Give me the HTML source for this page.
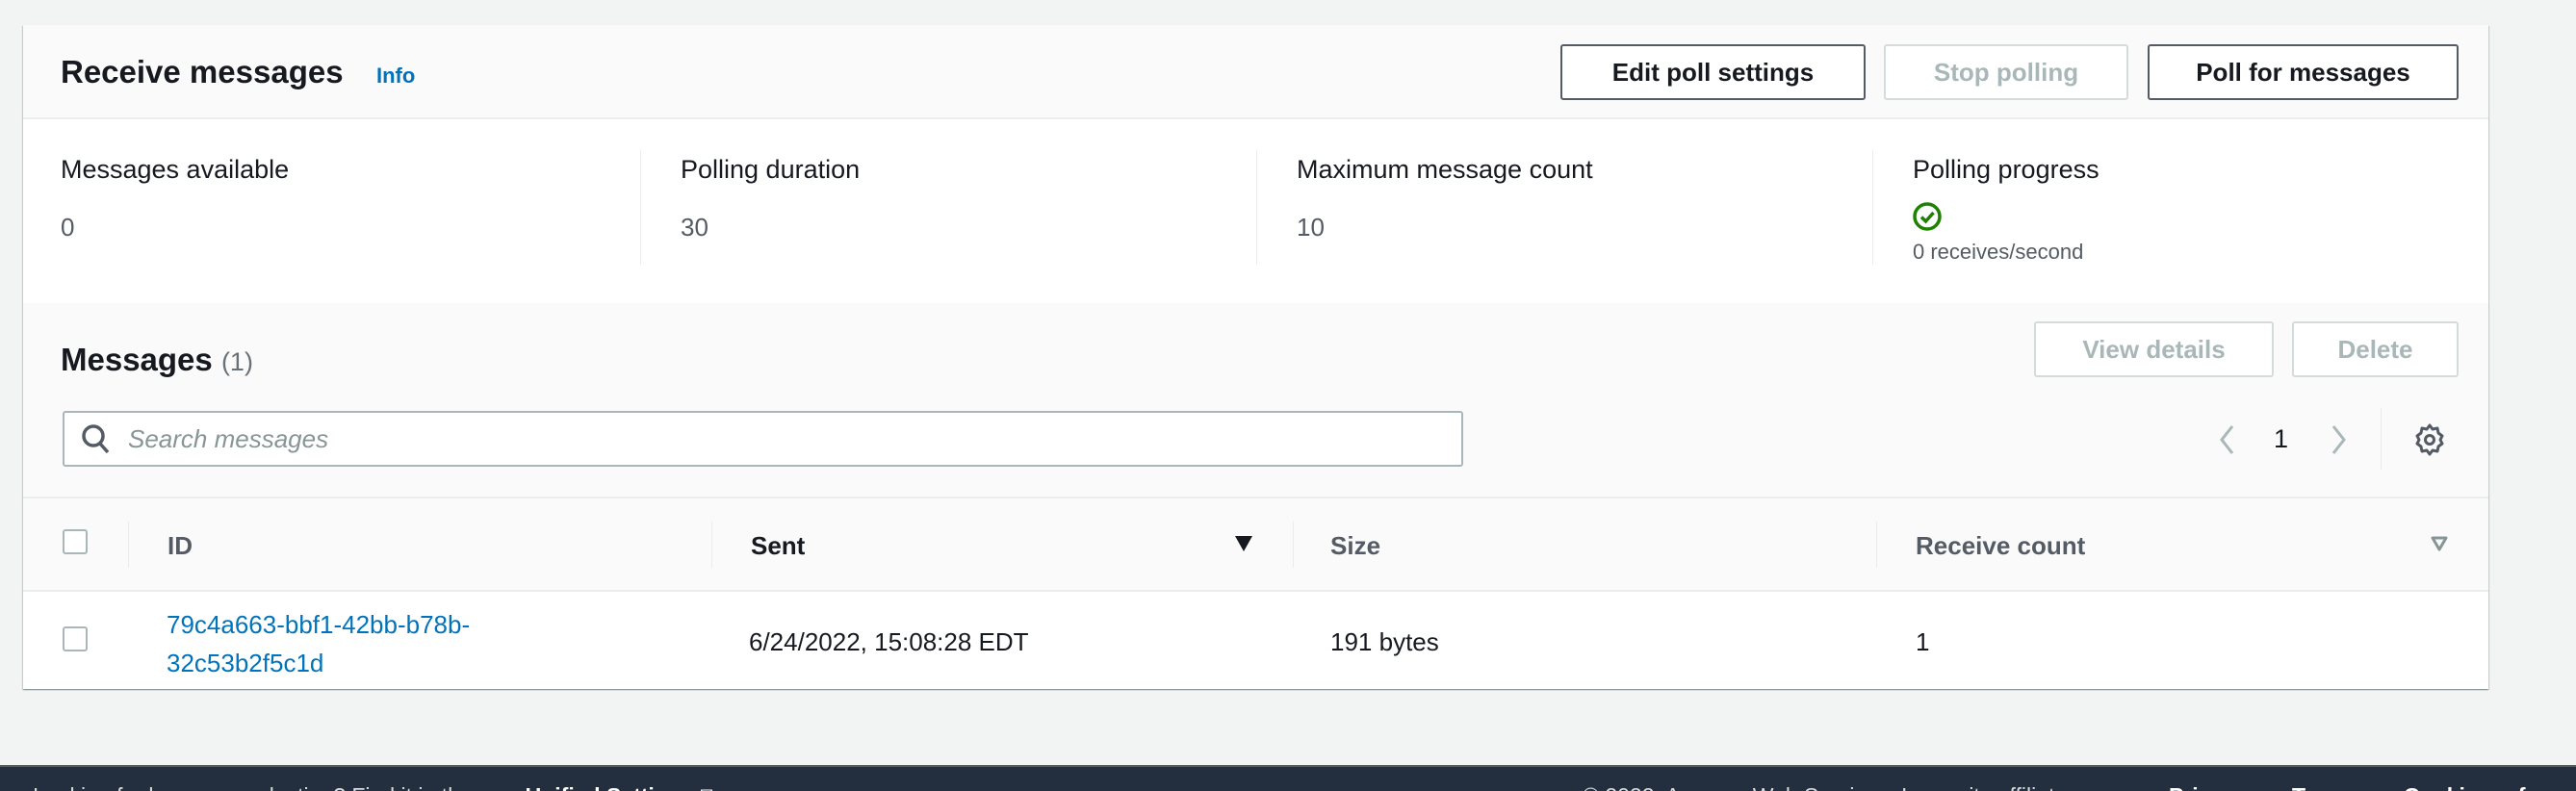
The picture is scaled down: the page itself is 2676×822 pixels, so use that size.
<!DOCTYPE html>
<html style="overflow:hidden;width:2676px;height:822px;background:#f2f3f3"><head><meta charset="utf-8"><style>
*{margin:0;padding:0;box-sizing:border-box}
body{width:2676px;height:822px;overflow:hidden;background:#f2f3f3;font-family:"Liberation Sans",sans-serif;color:#16191f;position:relative}
.a{position:absolute;white-space:nowrap}
.panel{position:absolute;left:24px;top:26px;width:2561px;height:690px;background:#fff;box-shadow:0 1px 1px 0 rgba(0,28,36,.3),1px 1px 1px 0 rgba(0,28,36,.15),-1px 1px 1px 0 rgba(0,28,36,.15)}
.btn{position:absolute;height:58px;border:2px solid #545b64;border-radius:3px;background:#fff;font-weight:bold;font-size:26px;color:#16191f;display:flex;align-items:center;justify-content:center}
.dis{border-color:#d5dbdb;color:#aab7b8}
.lbl{font-size:27px;color:#16191f}
.val{font-size:26px;color:#545b64}
.vd{position:absolute;width:1px;background:#eaeded}
.th{font-weight:bold;font-size:26px;color:#545b64}
.cb{position:absolute;width:26px;height:26px;border:2px solid #aab7b8;border-radius:3px;background:#fff}
#ft{position:absolute;left:0;top:795px;width:2676px;height:27px;background:#232f3e;border-top:2px solid #545b64;overflow:hidden}
#ft .a{top:17px;font-size:23px}
</style></head><body>
<div class="panel"></div>
<div class="a" style="left:24px;top:26px;width:2561px;height:98px;background:#fafafa;border-bottom:2px solid #eaeded"></div>
<div class="a" style="left:63px;top:56px;font-size:33px;font-weight:bold">Receive messages</div>
<div class="a" style="left:391px;top:66px;font-size:22px;font-weight:bold;color:#0073bb">Info</div>
<div class="btn" style="left:1621px;top:46px;width:317px">Edit poll settings</div>
<div class="btn dis" style="left:1957px;top:46px;width:254px">Stop polling</div>
<div class="btn" style="left:2231px;top:46px;width:323px">Poll for messages</div>
<div class="a lbl" style="left:63px;top:161px">Messages available</div>
<div class="a val" style="left:63px;top:221px">0</div>
<div class="vd" style="left:665px;top:155px;height:120px"></div>
<div class="a lbl" style="left:707px;top:161px">Polling duration</div>
<div class="a val" style="left:707px;top:221px">30</div>
<div class="vd" style="left:1305px;top:155px;height:120px"></div>
<div class="a lbl" style="left:1347px;top:161px">Maximum message count</div>
<div class="a val" style="left:1347px;top:221px">10</div>
<div class="vd" style="left:1945px;top:155px;height:120px"></div>
<div class="a lbl" style="left:1987px;top:161px">Polling progress</div>
<svg class="a" style="left:1986px;top:209px" width="32" height="32" viewBox="0 0 32 32"><circle cx="16" cy="16" r="13" fill="none" stroke="#1d8102" stroke-width="3.5"/><path d="M10 16.5l4.5 4.5 8-9" fill="none" stroke="#1d8102" stroke-width="3.5"/></svg>
<div class="a" style="left:1987px;top:249px;font-size:22px;color:#545b64">0 receives/second</div>
<div class="a" style="left:24px;top:315px;width:2561px;height:202px;background:#fafafa"></div>
<div class="a" style="left:63px;top:355px;font-size:33px;font-weight:bold">Messages <span style="font-weight:normal;font-size:27px;color:#687078">(1)</span></div>
<div class="btn dis" style="left:2113px;top:334px;width:249px">View details</div>
<div class="btn dis" style="left:2381px;top:334px;width:173px">Delete</div>
<div class="a" style="left:65px;top:427px;width:1455px;height:58px;border:2px solid #aab7b8;border-radius:3px;background:#fff"></div>
<svg class="a" style="left:84px;top:440px" width="32" height="34" viewBox="0 0 32 34"><circle cx="13" cy="13" r="10" fill="none" stroke="#545b64" stroke-width="3.5"/><path d="M20 21l8 9" stroke="#545b64" stroke-width="3.5"/></svg>
<div class="a" style="left:133px;top:441px;font-size:26px;font-style:italic;color:#879596">Search messages</div>
<svg class="a" style="left:2303px;top:440px" width="20" height="34" viewBox="0 0 20 34"><path d="M16 3L5 17l11 14" fill="none" stroke="#aab7b8" stroke-width="3"/></svg>
<div class="a" style="left:2362px;top:441px;font-size:27px;color:#16191f">1</div>
<svg class="a" style="left:2420px;top:440px" width="20" height="34" viewBox="0 0 20 34"><path d="M4 3l11 14L4 31" fill="none" stroke="#aab7b8" stroke-width="3"/></svg>
<div class="vd" style="left:2473px;top:424px;height:64px"></div>
<svg class="a" style="left:2508px;top:440px" width="32" height="34" viewBox="0 0 32 34"><path d="M16 2l3 4 5-1 1 5 4 3-2 4 2 4-4 3-1 5-5-1-3 4-3-4-5 1-1-5-4-3 2-4-2-4 4-3 1-5 5 1z" fill="none" stroke="#545b64" stroke-width="3" stroke-linejoin="round"/><circle cx="16" cy="17" r="4.5" fill="none" stroke="#545b64" stroke-width="3"/></svg>
<div class="a" style="left:24px;top:516px;width:2561px;height:99px;background:#fafafa;border-top:2px solid #eaeded;border-bottom:2px solid #eaeded"></div>
<div class="cb" style="left:65px;top:550px"></div>
<div class="vd" style="left:133px;top:542px;height:48px"></div>
<div class="a th" style="left:174px;top:552px">ID</div>
<div class="vd" style="left:739px;top:542px;height:48px"></div>
<div class="a th" style="left:780px;top:552px;color:#16191f">Sent</div>
<svg class="a" style="left:1282px;top:556px" width="20" height="18" viewBox="0 0 20 18"><path d="M1 1h18L10 17z" fill="#16191f"/></svg>
<div class="vd" style="left:1343px;top:542px;height:48px"></div>
<div class="a th" style="left:1382px;top:552px">Size</div>
<div class="vd" style="left:1949px;top:542px;height:48px"></div>
<div class="a th" style="left:1990px;top:552px">Receive count</div>
<svg class="a" style="left:2525px;top:557px" width="18" height="16" viewBox="0 0 18 16"><path d="M2 2h14L9 14z" fill="none" stroke="#879596" stroke-width="3" stroke-linejoin="round"/></svg>
<div class="cb" style="left:65px;top:651px"></div>
<div class="a" style="left:173px;top:629px;font-size:26px;color:#0073bb;line-height:40px">79c4a663-bbf1-42bb-b78b-<br>32c53b2f5c1d</div>
<div class="a" style="left:778px;top:652px;font-size:26px">6/24/2022, 15:08:28 EDT</div>
<div class="a" style="left:1382px;top:652px;font-size:26px">191 bytes</div>
<div class="a" style="left:1990px;top:652px;font-size:26px">1</div>
<div id="ft">
<div class="a" style="left:-8px;color:#d5dbdb">a… Looking for language selection? Find it in the new <b style="color:#fff">Unified Settings</b> <span style="color:#fff">⧉</span></div>
<div class="a" style="left:1644px;color:#d5dbdb">© 2022, Amazon Web Services, Inc. or its affiliates.</div>
<div class="a" style="left:2253px;color:#fff;font-weight:bold">Privacy</div>
<div class="a" style="left:2381px;color:#fff;font-weight:bold">Terms</div>
<div class="a" style="left:2497px;color:#fff;font-weight:bold">Cookie preferences</div>
</div>
</body></html>
